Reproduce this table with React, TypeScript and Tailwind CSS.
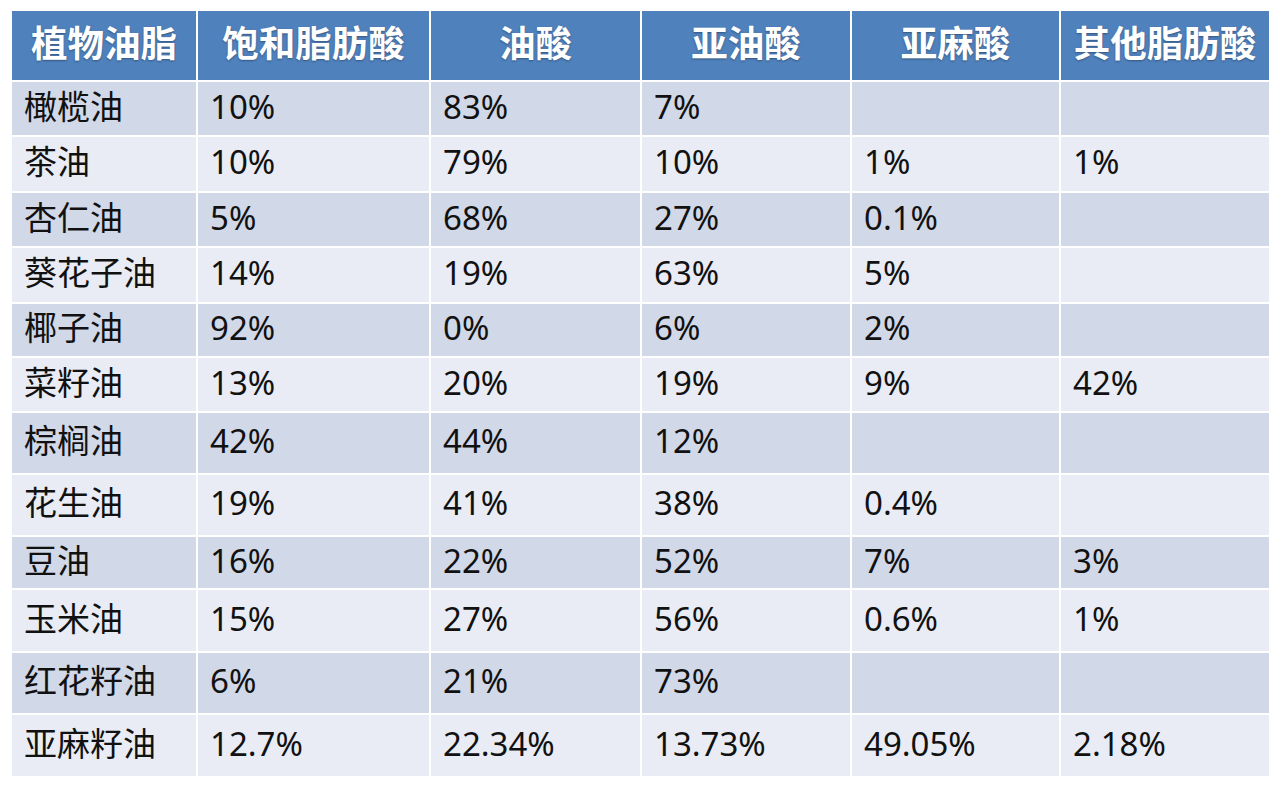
const headers = ["植物油脂", "饱和脂肪酸", "油酸", "亚油酸", "亚麻酸", "其他脂肪酸"];

const rows: string[][] = [
  ["橄榄油", "10%", "83%", "7%", "", ""],
  ["茶油", "10%", "79%", "10%", "1%", "1%"],
  ["杏仁油", "5%", "68%", "27%", "0.1%", ""],
  ["葵花子油", "14%", "19%", "63%", "5%", ""],
  ["椰子油", "92%", "0%", "6%", "2%", ""],
  ["菜籽油", "13%", "20%", "19%", "9%", "42%"],
  ["棕榈油", "42%", "44%", "12%", "", ""],
  ["花生油", "19%", "41%", "38%", "0.4%", ""],
  ["豆油", "16%", "22%", "52%", "7%", "3%"],
  ["玉米油", "15%", "27%", "56%", "0.6%", "1%"],
  ["红花籽油", "6%", "21%", "73%", "", ""],
  ["亚麻籽油", "12.7%", "22.34%", "13.73%", "49.05%", "2.18%"],
];

const App = () => {
  return (
    <div className="min-h-screen w-[1280px] h-[788px] bg-white pl-[12px] pt-[11px] font-['Segoe_UI','Noto_Sans','Noto_Sans_CJK_SC',sans-serif]">
      <div className="grid grid-cols-[184px_231px_209px_208px_207px_208px] grid-rows-[69px_53px_54px_53px_54px_52px_53px_60px_60px_51px_61px_60px_61px] gap-[2px] w-[1257px]">
        {headers.map((h) => (
          <div
            key={h}
            className="bg-[#4f81bd] text-white font-bold text-[36.5px] flex items-center justify-center pb-[4px] [text-shadow:0_1px_2px_rgba(0,0,0,0.35)]"
          >
            {h}
          </div>
        ))}
        {rows.map((r, i) =>
          r.map((c, j) => (
            <div
              key={`${i}-${j}`}
              className={`${i % 2 === 0 ? "bg-[#d1d8e7]" : "bg-[#e9ecf4]"} text-[#111] text-[33px] flex items-center pl-[12px] pb-[4px]`}
            >
              {c}
            </div>
          ))
        )}
      </div>
    </div>
  );
};

export default App;
